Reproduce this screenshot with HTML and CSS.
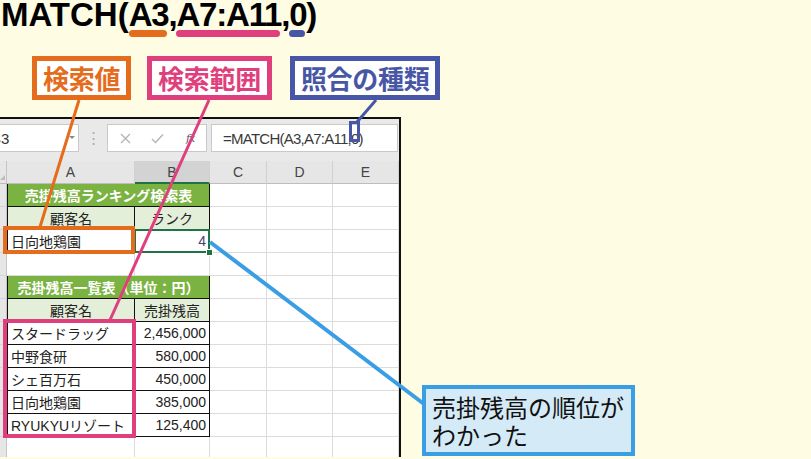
FILE: index.html
```html
<!DOCTYPE html>
<html lang="ja">
<head>
    <meta charset="UTF-8">
    <meta name="viewport" content="width=device-width, initial-scale=1.0">
    <title>MATCH関数</title>
    <link rel="stylesheet" href="styles.css">
</head>
<body>
    <h1 class="formula-title">MATCH(<span class="args"><span class="arg arg-lookup">A3</span>,<span class="arg arg-range">A7:A11</span>,<span class="arg arg-type">0</span>)</span></h1>

    <div class="labels">
        <div class="label label-lookup">検索値</div>
        <div class="label label-range">検索範囲</div>
        <div class="label label-type">照合の種類</div>
    </div>

    <div class="sheet">
        <div class="formula-bar">
            <div class="name-box"><span class="name-text">B3</span><span class="dropdown"></span></div>
            <div class="grip">⋮</div>
            <div class="fx-buttons">
                <svg class="btn-cancel" width="11" height="11" viewBox="0 0 11 11"><path d="M1 1 L10 10 M10 1 L1 10" /></svg>
                <svg class="btn-enter" width="13" height="11" viewBox="0 0 13 11"><path d="M1 6 L4.5 9.5 L12 1.5" /></svg>
                <span class="btn-fx">fx</span>
            </div>
            <div class="formula-input">=MATCH(A3,A7:A11,0)</div>
        </div>

        <div class="grid">
            <div class="corner"></div>
            <div class="col-head">A</div>
            <div class="col-head active">B</div>
            <div class="col-head">C</div>
            <div class="col-head">D</div>
            <div class="col-head">E</div>

            <div class="row-head"></div>
            <div class="cell tb tl title">売掛残高ランキング検索表</div>
            <div class="cell"></div><div class="cell"></div><div class="cell"></div>

            <div class="row-head"></div>
            <div class="cell tb tl head">顧客名</div>
            <div class="cell tb head">ランク</div>
            <div class="cell"></div><div class="cell"></div><div class="cell"></div>

            <div class="row-head"></div>
            <div class="cell tb tl">日向地鶏園</div>
            <div class="cell tb num selected">4<span class="fill-handle"></span></div>
            <div class="cell"></div><div class="cell"></div><div class="cell"></div>

            <div class="row-head"></div>
            <div class="cell"></div><div class="cell"></div>
            <div class="cell"></div><div class="cell"></div><div class="cell"></div>

            <div class="row-head"></div>
            <div class="cell tb tl title">売掛残高一覧表（単位：円）</div>
            <div class="cell"></div><div class="cell"></div><div class="cell"></div>

            <div class="row-head"></div>
            <div class="cell tb tl head">顧客名</div>
            <div class="cell tb head">売掛残高</div>
            <div class="cell"></div><div class="cell"></div><div class="cell"></div>

            <div class="row-head"></div>
            <div class="cell tb tl">スタードラッグ</div>
            <div class="cell tb num">2,456,000</div>
            <div class="cell"></div><div class="cell"></div><div class="cell"></div>

            <div class="row-head"></div>
            <div class="cell tb tl">中野食研</div>
            <div class="cell tb num">580,000</div>
            <div class="cell"></div><div class="cell"></div><div class="cell"></div>

            <div class="row-head"></div>
            <div class="cell tb tl">シェ百万石</div>
            <div class="cell tb num">450,000</div>
            <div class="cell"></div><div class="cell"></div><div class="cell"></div>

            <div class="row-head"></div>
            <div class="cell tb tl">日向地鶏園</div>
            <div class="cell tb num">385,000</div>
            <div class="cell"></div><div class="cell"></div><div class="cell"></div>

            <div class="row-head"></div>
            <div class="cell tb tl">RYUKYUリゾート</div>
            <div class="cell tb num">125,400</div>
            <div class="cell"></div><div class="cell"></div><div class="cell"></div>

            <div class="row-head"></div>
            <div class="cell"></div><div class="cell"></div>
            <div class="cell"></div><div class="cell"></div><div class="cell"></div>
        </div>
    </div>

    <!-- connector lines and highlight frames drawn over the sheet -->
    <svg class="marks" width="811" height="459" viewBox="0 0 811 459">
        <line class="mark-lookup" x1="79" y1="100" x2="40" y2="227" />
        <line class="mark-range" x1="209" y1="100" x2="110" y2="320" />
        <line class="mark-type" x1="376" y1="100" x2="357" y2="122" />
        <rect class="mark-lookup" x="5" y="228" width="128" height="24" />
        <rect class="mark-range" x="5" y="321" width="129" height="115" />
        <rect class="mark-type thin" x="350.5" y="122.5" width="8" height="18" />
        <line class="mark-result" x1="210" y1="242" x2="424" y2="404" />
    </svg>

    <div class="callout">売掛残高の順位が<br>わかった</div>
</body>
</html>
```

FILE: styles.css
```css
body {
    margin: 0;
    width: 811px;
    height: 459px;
    position: relative;
    overflow: hidden;
    background: #fefce3;
    font-family: "Liberation Sans", "Noto Sans CJK JP", sans-serif;
    color: #222;
}

/* big formula heading */
.formula-title {
    margin: 0;
    padding-left: 1px;
    font-size: 33px;
    line-height: 29px;
    font-weight: bold;
    color: #000;
    white-space: nowrap;
}

.args {
    letter-spacing: -1.2px;
}

.arg {
    position: relative;
}

.arg::after {
    content: '';
    position: absolute;
    left: 0;
    right: 1px;
    top: 34px;
    height: 7px;
    border-radius: 4px;
}

.arg-lookup::after { background: #e46c1c; }
.arg-range::after { background: #e03f7e; }
.arg-type::after { background: #4857a5; }

/* argument labels */
.labels {
    display: flex;
    gap: 16px;
    margin-top: 27px;
    padding-left: 32px;
}

.label {
    background: #fff;
    border: 5px solid;
    padding: 0 6px;
    font-family: "Noto Sans CJK JP", sans-serif;
    font-size: 26px;
    font-weight: bold;
    line-height: 34px;
    letter-spacing: -0.3px;
}

.label-lookup { color: #e46c1c; border-color: #e46c1c; }
.label-range { color: #e03f7e; border-color: #e03f7e; }
.label-type { color: #4857a5; border-color: #4857a5; margin-left: 2px; }

/* spreadsheet window */
.sheet {
    margin-top: 17px;
    width: 401px;
    height: 340px;
    box-sizing: border-box;
    border-top: 2px solid #111;
    border-right: 2px solid #111;
    background: #fff;
    overflow: hidden;
}

.formula-bar {
    height: 42px;
    box-sizing: border-box;
    padding-top: 5px;
    background: #e9e9e9;
    display: flex;
    align-items: flex-start;
}

.name-box,
.fx-buttons,
.formula-input {
    height: 28px;
    box-sizing: border-box;
    background: #fff;
    border: 1px solid #c9c9c9;
    display: flex;
    align-items: center;
}

.name-box {
    width: 79px;
    border-left: none;
    position: relative;
    overflow: hidden;
    font-size: 15px;
    color: #333;
}

.name-text {
    margin-left: -9px;
}

.dropdown {
    position: absolute;
    left: 69px;
    top: 11px;
    border-left: 3px solid transparent;
    border-right: 3px solid transparent;
    border-top: 3px solid #888;
}

.grip {
    width: 28px;
    text-align: center;
    font-size: 15px;
    line-height: 28px;
    color: #aaa;
}

.fx-buttons {
    width: 100px;
    position: relative;
}

.fx-buttons svg {
    fill: none;
    stroke: #b4b4b4;
    stroke-width: 1.4;
}

.btn-cancel { margin-left: 12px; }
.btn-enter { margin-left: 20px; }

.btn-fx {
    margin-left: 22px;
    font-family: "DejaVu Serif", serif;
    font-style: italic;
    font-size: 11px;
    color: #555;
    letter-spacing: -1px;
}

.formula-input {
    flex: 1;
    margin: 0 1px 0 4px;
    padding-left: 11px;
    font-size: 15px;
    letter-spacing: -0.75px;
    color: #3a3a3a;
}

/* cell grid */
.grid {
    display: grid;
    grid-template-columns: 7px 128px 75px 57px 66px 66px;
    grid-template-rows: 23px;
    grid-auto-rows: 23px;
}

.corner,
.row-head {
    background: #e6e6e6;
    border-right: 1px solid #c4c4c4;
    border-bottom: 1px solid #d6d6d6;
    box-sizing: border-box;
}

.corner {
    position: relative;
    border-bottom-color: #bdbdbd;
}

.corner::after {
    content: '';
    position: absolute;
    right: 1px;
    bottom: 3px;
    border-left: 5px solid transparent;
    border-bottom: 5px solid #bcbcbc;
}

.col-head {
    background: #e6e6e6;
    border-right: 1px solid #d0d0d0;
    border-bottom: 1px solid #bdbdbd;
    box-sizing: border-box;
    display: flex;
    align-items: center;
    justify-content: center;
    font-size: 14px;
    color: #444;
}

.col-head.active {
    background: #d3d3d3;
    border-bottom: 2px solid #217346;
}

.cell {
    border-right: 1px solid #dcdcdc;
    border-bottom: 1px solid #dcdcdc;
    box-sizing: border-box;
    display: flex;
    align-items: center;
    padding: 0 3px;
    font-size: 14px;
    white-space: nowrap;
}

.tb {
    border-right-color: #111;
    border-bottom-color: #111;
}

.tl {
    border-left: 1px solid #111;
}

.title {
    grid-column: span 2;
    justify-content: center;
    background: #7bb342;
    color: #fff;
    font-weight: bold;
}

.head {
    justify-content: center;
    background: #e3efd9;
}

.num {
    justify-content: flex-end;
}

.selected {
    position: relative;
    color: #4a3f6b;
}

.selected::after {
    content: '';
    position: absolute;
    left: -1px;
    top: -1px;
    right: -1px;
    bottom: -1px;
    border: 2px solid #217346;
}

.fill-handle {
    position: absolute;
    right: -4px;
    bottom: -4px;
    width: 5px;
    height: 5px;
    background: #217346;
    border: 1px solid #fff;
    z-index: 1;
}

/* annotation layer */
.marks {
    position: absolute;
    left: 0;
    top: 0;
    pointer-events: none;
}

.marks line,
.marks rect {
    fill: none;
    stroke-width: 4;
}

.marks line {
    stroke-width: 3;
}

.marks .thin {
    stroke-width: 3;
}

.mark-lookup { stroke: #e46c1c; }
.mark-range { stroke: #e03f7e; }
.mark-type { stroke: #4857a5; }

.marks .mark-result {
    stroke: #3a9ee4;
    stroke-width: 4;
}

.callout {
    position: absolute;
    left: 422px;
    top: 385px;
    width: 213px;
    height: 71px;
    box-sizing: border-box;
    padding: 4px 0 0 6px;
    border: 4px solid #3a9ee4;
    background: #d5eaf7;
    font-family: "Noto Sans CJK JP", sans-serif;
    font-size: 24px;
    line-height: 28px;
    color: #111;
}
```
